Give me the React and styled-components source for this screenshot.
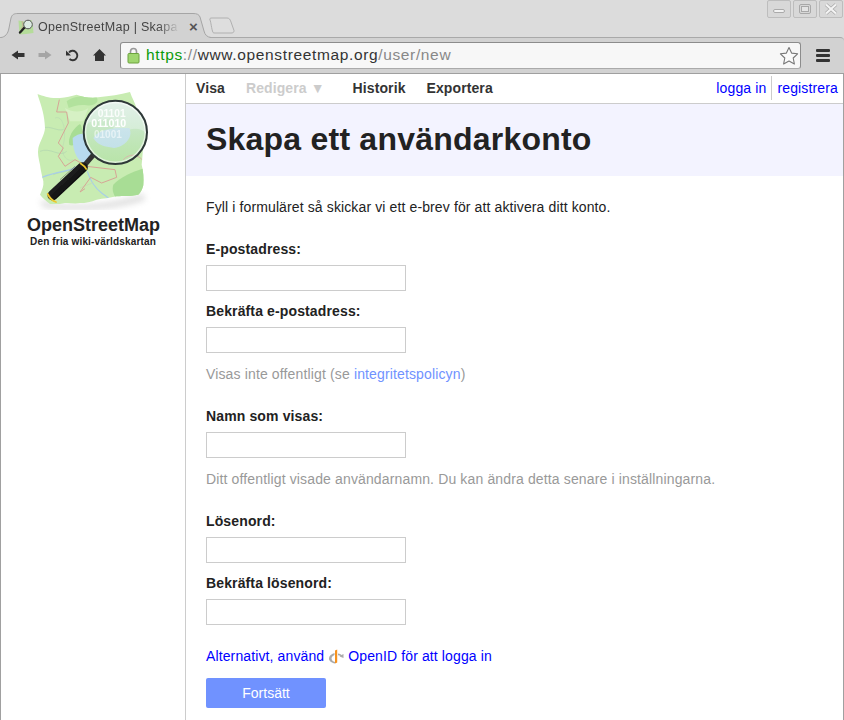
import React from "react";
import styled, { createGlobalStyle } from "styled-components";

const Global = createGlobalStyle`
  html, body { margin: 0; padding: 0; height: 720px; overflow: hidden; background: #dcdcdc; }
  body { font-family: "Liberation Sans", Arial, sans-serif; font-size: 14px; color: #222; }
  * { box-sizing: border-box; }
`;

const Browser = styled.div`
  width: 844px; height: 720px; display: flex; flex-direction: column; background: #dcdcdc; overflow: hidden;
`;
const TitleBar = styled.div`
  height: 37px; flex: none; display: flex; align-items: flex-end; padding-left: 1px; position: relative; z-index: 1;
`;
const TabStrip = styled.div`display: flex; align-items: flex-end; height: 26px; margin-bottom: -1px;`;
const Tab = styled.div`
  position: relative; width: 210px; height: 26px; display: flex; align-items: center; padding: 3px 12px 0 17px; gap: 4px; color: #444; font-size: 12.5px;
  & > svg.shape { position: absolute; left: 0; top: 0; }
`;
const TabTitle = styled.span`
  position: relative; flex: 1; white-space: nowrap; overflow: hidden; letter-spacing: 0.28px;
  -webkit-mask-image: linear-gradient(90deg, #000 82%, transparent 97%);
  mask-image: linear-gradient(90deg, #000 82%, transparent 97%);
`;
const TabClose = styled.span`position: relative; font-size: 15px; color: #555; font-weight: bold; width: 11px; text-align: center; line-height: 14px;`;
const NewTab = styled.svg`margin: 0 0 4px -3px; display: block;`;
const WindowButtons = styled.div`position: absolute; right: 1px; top: 0; display: flex; gap: 2px;`;
const WinButton = styled.div`
  width: 24px; height: 18px; border: 1px solid #bdbdbd; border-radius: 2px; background: #d8d8d8; display: flex; align-items: center; justify-content: center;
`;
const Toolbar = styled.div`
  height: 37px; flex: none; background: #d2d2d2; border-top: 1px solid #a9a9a9; border-bottom: 1px solid #9f9f9f; border-top-right-radius: 4px; display: flex; align-items: center; padding: 0 0 1px 10px;
`;
const NavIcon = styled.svg`display: block; flex: none; margin-right: ${p => p.$gap}px;`;
const Omnibox = styled.div`
  width: 681px; height: 27px; margin-right: 15px; background: #f7f7f7; border: 1px solid #8c8c8c; border-bottom-color: #aaa; border-radius: 3px; display: flex; align-items: center; padding: 0 0 0 6px; font-size: 15.5px; color: #333; letter-spacing: 0.64px; flex: none;
`;
const Https = styled.span`color: #0a9a0a; margin-left: 6px;`;
const Faded = styled.span`color: #888;`;
const UrlSpacer = styled.div`flex: 1;`;
const Menu = styled.div`
  width: 14px; display: flex; flex-direction: column; gap: 2px;
  & > i { display: block; height: 3px; border-radius: 1px; background: #333; }
`;

const Page = styled.div`
  flex: 1; display: grid; grid-template-columns: 185px 1fr; background: #fff; border-left: 1px solid #a0a0a0; border-right: 1px solid #a0a0a0; min-height: 0;
`;
const Sidebar = styled.aside`
  border-right: 1px solid #ccc; display: flex; flex-direction: column; align-items: center; padding-top: 14px;
`;
const Logo = styled.svg`display: block; margin-left: -1px; flex: none;`;
const Brand = styled.div`font-size: 18px; font-weight: bold; margin-top: 4px; line-height: 22px; color: #222; padding-left: 1px;`;
const Tagline = styled.div`font-size: 10px; font-weight: bold; line-height: 12px; color: #222; letter-spacing: 0.16px;`;

const Main = styled.main`display: flex; flex-direction: column; min-width: 0;`;
const TopNav = styled.nav`
  height: 30px; flex: none; border-bottom: 1px solid #ccc; display: flex; align-items: center; justify-content: space-between; padding: 0 5px 1px 10px; letter-spacing: 0.1px;
`;
const TopLinks = styled.div`display: flex; align-items: center;`;
const TopLink = styled.a`
  font-weight: bold; color: ${p => (p.$disabled ? "#ccc" : "#333")}; margin-right: ${p => p.$gap}px; white-space: nowrap;
`;
const Auth = styled.div`display: flex; align-items: center; letter-spacing: 0.14px;`;
const AuthLink = styled.a`
  color: #00f; padding: ${p => (p.$last ? "0 0 0 5px" : "0 5px 0 0")}; line-height: 24px; ${p => (p.$last ? "border-left: 1px solid #ccc;" : "")}
`;
const Band = styled.header`height: 72px; flex: none; background: #f3f3ff; padding: 0 20px; display: flex; align-items: center;`;
const Title = styled.h1`margin: 0; font-size: 32px; font-weight: bold; color: #222; line-height: 36px; letter-spacing: 0.22px; position: relative; top: -1px;`;
const Form = styled.form`padding: 22px 20px 0; display: flex; flex-direction: column; letter-spacing: 0.12px;`;
const Intro = styled.p`margin: 0 0 24px; line-height: 18px;`;
const Field = styled.div`display: flex; flex-direction: column; margin-bottom: 11px;`;
const Label = styled.label`font-weight: bold; line-height: 18px; margin-bottom: 7px; letter-spacing: 0.13px;`;
const Input = styled.input`
  width: 200px; height: 26px; border: 1px solid #ccc; background: #fff; padding: 0 4px; font: inherit; display: block; border-radius: 0; outline: none;
`;
const Hint = styled.p`margin: 0 0 25px; color: #999; line-height: 18px; position: relative; top: 1px; letter-spacing: 0.14px;`;
const HintLink = styled.a`color: #7092ff;`;
const OpenIdRow = styled.p`margin: 11px 0 13px; line-height: 18px; color: #00f; display: flex; align-items: center; gap: 4px;`;
const Submit = styled.button`
  width: 120px; height: 30px; border: 0; border-radius: 2px; background: #7092ff; color: #fff; font: inherit; padding: 0; letter-spacing: 0;
`;

function Favicon() {
  return (
    <svg width="16" height="16" viewBox="0 0 16 16" style={{ position: "relative", flex: "none" }}>
      <path d="M0.500 1.500L6 2.500L13.500 1L15 8L15.500 14L8 15L1.500 15.500L1 9z" fill="#b5dc9a" />
      <path d="M4 2L5 7L3 10" fill="none" stroke="#c9a08f" strokeWidth="0.7" />
      <path d="M6.500 8.500L2 13.500" stroke="#222" strokeWidth="2.400" strokeLinecap="round" />
      <circle cx="10" cy="5.500" r="4.300" fill="#dcebe2" stroke="#555" strokeWidth="1" />
    </svg>
  );
}

function OsmLogo() {
  return (
    <Logo width="125" height="122" viewBox="0 0 375 366">
      <defs>
        <linearGradient id="glass" x1="0" y1="0" x2="0" y2="1">
          <stop offset="0" stopColor="#e6f2ee" stopOpacity="0.9" />
          <stop offset="0.5" stopColor="#d8ece4" stopOpacity="0.45" />
          <stop offset="1" stopColor="#d2eec8" stopOpacity="0.15" />
        </linearGradient>
        <linearGradient id="bar" x1="0" y1="0" x2="1" y2="1">
          <stop offset="0" stopColor="#3a3a3a" />
          <stop offset="0.6" stopColor="#111" />
          <stop offset="1" stopColor="#000" />
        </linearGradient>
        <filter id="soft" x="-20%" y="-20%" width="140%" height="140%"><feGaussianBlur stdDeviation="9" /></filter>
        <filter id="fine" x="-5%" y="-5%" width="110%" height="110%"><feGaussianBlur stdDeviation="1.100" /></filter>
        <clipPath id="mapEdge">
          <path d="M22 18C42 24 56 32 90 30C108 28 125 24 140 20C160 26 180 32 205 28C240 24 270 20 300 12C306 30 316 46 320 62C330 90 338 110 342 135C340 170 338 200 335 230C340 250 342 272 340 292C336 306 332 314 325 320C300 326 280 322 260 325C240 330 220 332 200 335C184 342 166 345 150 345C134 348 118 344 105 345C90 348 74 350 60 348C48 338 38 330 30 320C36 306 42 294 40 280C36 262 32 248 30 230C26 212 22 196 25 180C30 160 44 140 45 120C44 102 42 86 38 70C34 52 28 36 22 18z" />
        </clipPath>
        <clipPath id="lensClip"><circle cx="256" cy="133" r="94" /></clipPath>
      </defs>
      <path d="M30 335C100 362 240 352 340 318L345 335C260 366 110 372 40 356z" fill="#888" opacity="0.3" filter="url(#soft)" />
      <g filter="url(#fine)">
        <g clipPath="url(#mapEdge)">
          <rect width="375" height="366" fill="#c8ecb2" />
          <path d="M110 40C130 24 170 20 200 28C210 44 190 56 170 52C150 48 130 54 116 60z" fill="#b2e29d" />
          <path d="M118 170C112 150 130 120 150 108C160 120 156 140 150 156C140 170 126 176 118 170z" fill="#a8dd95" />
          <path d="M250 290C270 268 310 250 345 240V330H258C248 316 246 302 250 290z" fill="#a8dd95" />
          <path d="M105 60C120 70 150 78 175 60L160 100L120 100z" fill="#d6f1c4" />
          <path d="M40 120C60 112 80 130 100 125M30 190C60 176 90 210 110 190M70 260C90 250 110 255 125 240" fill="none" stroke="#a8cdb0" strokeWidth="1.500" />
          <path d="M75 90C100 80 110 130 100 170C90 195 110 225 130 215" fill="none" stroke="#b8d6b4" strokeWidth="1.500" />
          <path d="M128 150C142 138 158 134 172 140L190 210L164 226C146 222 128 196 128 150z" fill="#b8daee" />
          <path d="M22 275C50 258 90 252 122 245C140 238 150 228 165 222" fill="none" stroke="#a8cde8" strokeWidth="3.500" />
          <path d="M172 250C180 275 195 300 215 315C228 324 240 332 250 345" fill="none" stroke="#a8cde8" strokeWidth="3.500" />
          <path d="M150 300C165 292 180 290 190 282" fill="none" stroke="#c6d9b0" strokeWidth="2" />
          <path d="M88 35L80 72H110L115 105L85 165L100 180L85 205L105 235L135 215L170 235L255 245L260 268L215 285L182 268L150 312L165 302" fill="none" stroke="#d6a596" strokeWidth="3" strokeLinejoin="round" />
          <path d="M290 212C310 196 335 205 340 222" fill="none" stroke="#d8a8a0" strokeWidth="2.500" />
        </g>
        <path d="M195 195L165 230" stroke="#333" strokeWidth="15" />
        <path d="M158 238L68 322" stroke="url(#bar)" strokeWidth="31" strokeLinecap="round" />
        <path d="M150 225C158 230 166 237 170 245" fill="none" stroke="#ecc72f" strokeWidth="5" />
        <path d="M53 318C58 328 66 338 78 342" fill="none" stroke="#ecc72f" strokeWidth="5.500" strokeLinecap="round" />
        <path d="M90 275L135 235" stroke="#666" strokeWidth="3" opacity="0.6" />
        <circle cx="256" cy="133" r="94" fill="#d2eecb" />
        <g clipPath="url(#lensClip)">
          <path d="M160 120C178 90 220 100 240 90C262 120 240 150 262 160C276 120 330 110 352 140V230H160z" fill="#b4e2a4" />
          <path d="M190 150C210 118 262 120 298 120C312 150 280 178 252 180C232 176 204 176 190 150z" fill="#bcdcf0" />
          <path d="M280 215C296 196 325 198 338 216" fill="none" stroke="#d8a8a0" strokeWidth="3" />
          <circle cx="256" cy="133" r="94" fill="url(#glass)" />
          <text x="203" y="88" fontFamily="Liberation Sans, sans-serif" fontWeight="bold" fontSize="31" fill="#fff" opacity="0.85">01101</text>
          <text x="184" y="118" fontFamily="Liberation Sans, sans-serif" fontWeight="bold" fontSize="32" fill="#fff">011010</text>
          <text x="192" y="150" fontFamily="Liberation Sans, sans-serif" fontWeight="bold" fontSize="30" fill="#fff" opacity="0.55">01001</text>
        </g>
        <circle cx="256" cy="133" r="90" fill="none" stroke="#fff" strokeWidth="5" opacity="0.55" />
        <circle cx="256" cy="133" r="95" fill="none" stroke="#2e3838" strokeWidth="6" />
      </g>
    </Logo>
  );
}

export default function App() {
  return (
    <Browser>
      <Global />
      <TitleBar>
        <TabStrip>
          <Tab>
            <svg className="shape" width="210" height="26" viewBox="0 0 210 26">
              <path d="M0 26V25.500C4 25 7 22 8 16L10 6C11 2.500 13 1.500 17 1.500H192C196 1.500 198 2.500 199 5L203 19C204 23 206 25 210 25.500V26z" fill="#d2d2d2" />
              <path d="M0 25.500C4 25 7 22 8 16L10 6C11 2.500 13 1.500 17 1.500H192C196 1.500 198 2.500 199 5L203 19C204 23 206 25 210 25.500" fill="none" stroke="#a5a5a5" />
            </svg>
            <Favicon />
            <TabTitle>OpenStreetMap | Skapa ett</TabTitle>
            <TabClose>×</TabClose>
          </Tab>
          <NewTab width="28" height="17" viewBox="0 0 28 17">
            <path d="M5 15.500C3.500 12 3 5 2 3C1.500 1.500 2 1 4 1H19C21 1 22 2 23 5L26 13.500C26 15.500 25 16 23 16H7C6 16 5.500 16 5 15.500z" fill="#dedede" stroke="#b0b0b0" />
          </NewTab>
        </TabStrip>
        <WindowButtons>
          <WinButton>
            <svg width="14" height="12" viewBox="0 0 14 12"><rect x="1.500" y="6.500" width="11" height="3" rx="1.500" fill="#f2f2f2" stroke="#aaa" /></svg>
          </WinButton>
          <WinButton>
            <svg width="14" height="12" viewBox="0 0 14 12"><rect x="1.500" y="1.500" width="11" height="9" rx="1.500" fill="none" stroke="#a8a8a8" /><rect x="3.500" y="3.500" width="7" height="5" fill="#e4e4e4" stroke="#a8a8a8" /></svg>
          </WinButton>
          <WinButton>
            <svg width="14" height="12" viewBox="0 0 14 12"><path d="M2 1.500l10 9M12 1.500l-10 9" stroke="#a8a8a8" strokeWidth="3.600" /><path d="M2 1.500l10 9M12 1.500l-10 9" stroke="#f4f4f4" strokeWidth="2.200" /></svg>
          </WinButton>
        </WindowButtons>
      </TitleBar>
      <Toolbar>
        <NavIcon $gap={11} width="16" height="12" viewBox="0 0 16 12"><path d="M1.500 6L8 1.500V4H14.500V8H8V10.500z" fill="#333" /></NavIcon>
        <NavIcon $gap={12} width="16" height="12" viewBox="0 0 16 12"><path d="M14.500 6L8 1.500V4H1.500V8H8V10.500z" fill="#a5a5a5" /></NavIcon>
        <NavIcon $gap={12} width="15" height="14" viewBox="0 0 15 14"><path d="M4 4.500A4.700 4.700 0 1 1 4.500 11" fill="none" stroke="#333" strokeWidth="1.900" /><path d="M1 2.500V7.500H6z" fill="#333" /></NavIcon>
        <NavIcon $gap={13} width="15" height="14" viewBox="0 0 15 14"><path d="M7.500 1L1 7.500H3V13H12V7.500H14z" fill="#333" /></NavIcon>
        <Omnibox>
          <svg width="13" height="17" viewBox="0 0 13 17" style={{ flex: "none" }}>
            <path d="M3.500 7V4.500a3 3 0 0 1 6 0V7" fill="none" stroke="#999" strokeWidth="1.600" />
            <rect x="1" y="6.500" width="11" height="9.500" rx="1" fill="#9fd66f" stroke="#6ca33e" />
          </svg>
          <Https>https</Https><Faded>://</Faded>www.openstreetmap.org<Faded>/user/new</Faded>
          <UrlSpacer />
          <svg width="20" height="19" viewBox="0 0 20 19" style={{ flex: "none", marginRight: 1 }}>
            <path d="M10 1.500l2.600 5.600 6 .7-4.400 4.200 1.200 6-5.400-3-5.400 3 1.200-6L1.400 7.800l6-.7z" fill="#fafafa" stroke="#777" strokeWidth="1.100" strokeLinejoin="round" />
          </svg>
        </Omnibox>
        <Menu><i /><i /><i /></Menu>
      </Toolbar>
      <Page>
        <Sidebar>
          <OsmLogo />
          <Brand>OpenStreetMap</Brand>
          <Tagline>Den fria wiki-världskartan</Tagline>
        </Sidebar>
        <Main>
          <TopNav>
            <TopLinks>
              <TopLink $gap={21}>Visa</TopLink>
              <TopLink $gap={28} $disabled>Redigera ▼</TopLink>
              <TopLink $gap={21}>Historik</TopLink>
              <TopLink $gap={0}>Exportera</TopLink>
            </TopLinks>
            <Auth>
              <AuthLink>logga in</AuthLink>
              <AuthLink $last>registrera</AuthLink>
            </Auth>
          </TopNav>
          <Band><Title>Skapa ett användarkonto</Title></Band>
          <Form>
            <Intro>Fyll i formuläret så skickar vi ett e-brev för att aktivera ditt konto.</Intro>
            <Field><Label>E-postadress:</Label><Input /></Field>
            <Field><Label>Bekräfta e-postadress:</Label><Input /></Field>
            <Hint>Visas inte offentligt (se <HintLink>integritetspolicyn</HintLink>)</Hint>
            <Field><Label>Namn som visas:</Label><Input /></Field>
            <Hint>Ditt offentligt visade användarnamn. Du kan ändra detta senare i inställningarna.</Hint>
            <Field><Label>Lösenord:</Label><Input /></Field>
            <Field><Label>Bekräfta lösenord:</Label><Input /></Field>
            <OpenIdRow>
              <span>Alternativt, använd</span>
              <svg width="16" height="16" viewBox="0 0 16 16" style={{ flex: "none" }}>
                <path d="M6.500 5C3 6 1 8 1 10.500C1 13 3.500 15 7 15.500V14C5 13.500 3.500 12 3.500 10.500C3.500 9 4.700 7.800 6.500 7z" fill="#aaa" />
                <path d="M7 2.500L9.200 1.500V14.500L7 15.500z" fill="#f7931e" />
                <path d="M10 5.500C11.500 5.700 12.800 6.200 13.500 7L15.500 6V10L11.500 8.500L12.500 8C11.800 7.600 11 7.400 10 7.300z" fill="#aaa" />
              </svg>
              <span>OpenID för att logga in</span>
            </OpenIdRow>
            <Submit type="button">Fortsätt</Submit>
          </Form>
        </Main>
      </Page>
    </Browser>
  );
}
